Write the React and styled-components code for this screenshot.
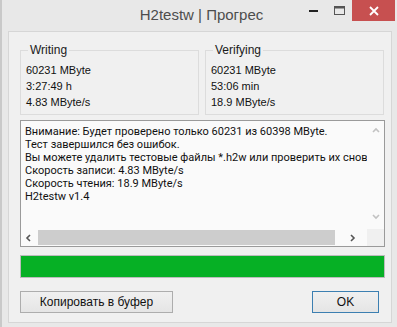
import React from 'react';
import styled, { createGlobalStyle } from 'styled-components';

const Global = createGlobalStyle`
  html, body { margin: 0; padding: 0; }
  body {
    width: 397px;
    height: 327px;
    overflow: hidden;
    font-family: "Liberation Sans", Arial, sans-serif;
    background: #e9e9e9;
  }
`;

const Frame = styled.div`
  width: 397px;
  height: 327px;
  box-sizing: border-box;
  background: #e8e8e8;
  border-left: 2px solid #c9c9c9;
  display: flex;
  flex-direction: column;
`;

const TitleBar = styled.div`
  height: 31px;
  display: flex;
  align-items: flex-start;
  position: relative;
`;

const Title = styled.div`
  flex: 1;
  text-align: center;
  font-size: 15px;
  color: #4d4d4d;
  line-height: 30px;
  padding-left: 4px;
`;

const Controls = styled.div`
  position: absolute;
  top: 0;
  right: 2px;
  display: flex;
  align-items: flex-start;
`;

const CtlButton = styled.div`
  width: ${p => p.$w}px;
  height: 21px;
  display: flex;
  align-items: center;
  justify-content: center;
  background: ${p => (p.$close ? '#c75050' : 'transparent')};
`;

const Client = styled.div`
  margin: 0 5px 4px 6px;
  flex: 1;
  background: #f0f0f0;
  border: 1px solid #d6d6d6;
  padding: 11px 6px 0 11px;
  display: flex;
  flex-direction: column;
`;

const Groups = styled.div`
  display: flex;
  gap: 6px;
  height: 72px;
  margin-right: 1px;
`;

const Group = styled.fieldset`
  margin: 0;
  flex: 1;
  border: 1px solid #dcdcdc;
  padding: 5px 6px 0 5px;
  min-width: 0;
`;

const Legend = styled.legend`
  padding: 0 2px;
  margin-left: 2px;
  font-size: 12px;
  color: #1a1a1a;
  line-height: 14px;
`;

const Row = styled.div`
  font-size: 11px;
  line-height: 16px;
  color: #111;
`;

const Memo = styled.div`
  margin-top: 5px;
  height: 127px;
  box-sizing: border-box;
  border: 1px solid #9a9a9a;
  background: #fafafa;
  display: grid;
  grid-template-columns: 1fr 17px;
  grid-template-rows: 1fr 17px;
`;

const MemoText = styled.div`
  padding: 4px 0 0 4px;
  font-family: Roboto, "Liberation Sans", sans-serif;
  font-size: 11px;
  line-height: 13px;
  color: #111;
  white-space: nowrap;
  overflow: hidden;
`;

const VScroll = styled.div`
  display: flex;
  flex-direction: column;
  justify-content: space-between;
  align-items: center;
  padding: 6px 0 8px;
`;

const HScroll = styled.div`
  display: flex;
  align-items: center;
  padding: 0 0 0 4px;
  gap: 5px;
`;

const Thumb = styled.div`
  height: 15px;
  width: 297px;
  background: #cdcdcd;
`;

const Corner = styled.div`
  background: #f0f0f0;
`;

const Progress = styled.div`
  margin-top: 8px;
  height: 23px;
  box-sizing: border-box;
  border: 1px solid #bcbcbc;
  background: #06b025;
`;

const Buttons = styled.div`
  margin-top: 13px;
  display: flex;
  justify-content: space-between;
  padding-right: 6px;
`;

const Button = styled.div`
  width: ${p => p.$w}px;
  height: 22px;
  box-sizing: border-box;
  border: 1px solid ${p => (p.$default ? '#3c7fb1' : '#adadad')};
  background: linear-gradient(#f0f0f0, #e5e5e5);
  font-size: 12px;
  color: #111;
  display: flex;
  align-items: center;
  justify-content: center;
`;

const Chevron = ({ dir, color }) => {
  const paths = {
    up: 'M1 5 L4 2 L7 5',
    down: 'M1 2 L4 5 L7 2',
    left: 'M5 1 L2 4 L5 7',
    right: 'M2 1 L5 4 L2 7',
  };
  return (
    <svg width="8" height="8" viewBox="0 0 8 8">
      <path d={paths[dir]} fill="none" stroke={color} strokeWidth="1.6" />
    </svg>
  );
};

export default function App() {
  return (
    <>
      <Global />
      <Frame>
        <TitleBar>
          <Title>H2testw | Прогрес</Title>
          <Controls>
            <CtlButton $w={26}>
              <svg width="9" height="3"><rect width="9" height="2" y="1" fill="#222" /></svg>
            </CtlButton>
            <CtlButton $w={26}>
              <svg width="11" height="10"><rect x="0.5" y="0.5" width="10" height="8" fill="none" stroke="#555" /><rect x="0.5" y="0.5" width="10" height="2" fill="#555" /></svg>
            </CtlButton>
            <CtlButton $w={43} $close>
              <svg width="10" height="10"><path d="M1 1 L9 9 M9 1 L1 9" stroke="#fff" strokeWidth="1.8" /></svg>
            </CtlButton>
          </Controls>
        </TitleBar>
        <Client>
          <Groups>
            <Group>
              <Legend>Writing</Legend>
              <Row>60231 MByte</Row>
              <Row>3:27:49 h</Row>
              <Row>4.83 MByte/s</Row>
            </Group>
            <Group>
              <Legend>Verifying</Legend>
              <Row>60231 MByte</Row>
              <Row>53:06 min</Row>
              <Row>18.9 MByte/s</Row>
            </Group>
          </Groups>
          <Memo>
            <MemoText>
              Внимание: Будет проверено только 60231 из 60398 MByte.<br />
              Тест завершился без ошибок.<br />
              Вы можете удалить тестовые файлы *.h2w или проверить их снова<br />
              Скорость записи: 4.83 MByte/s<br />
              Скорость чтения: 18.9 MByte/s<br />
              H2testw v1.4
            </MemoText>
            <VScroll>
              <Chevron dir="up" color="#c2c2c2" />
              <Chevron dir="down" color="#c2c2c2" />
            </VScroll>
            <HScroll>
              <Chevron dir="left" color="#555" />
              <Thumb />
              <span style={{ flex: 1 }} />
              <Chevron dir="right" color="#555" />
              <span style={{ width: 5 }} />
            </HScroll>
            <Corner />
          </Memo>
          <Progress />
          <Buttons>
            <Button $w={153}>Копировать в буфер</Button>
            <Button $w={67} $default>OK</Button>
          </Buttons>
        </Client>
      </Frame>
    </>
  );
}
